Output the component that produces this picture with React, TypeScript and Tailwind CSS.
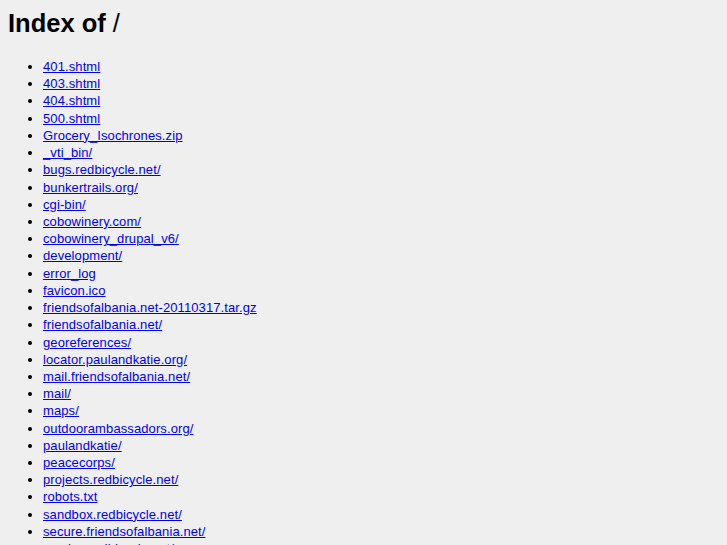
import React from 'react';

const entries = [
  '401.shtml',
  '403.shtml',
  '404.shtml',
  '500.shtml',
  'Grocery_Isochrones.zip',
  '_vti_bin/',
  'bugs.redbicycle.net/',
  'bunkertrails.org/',
  'cgi-bin/',
  'cobowinery.com/',
  'cobowinery_drupal_v6/',
  'development/',
  'error_log',
  'favicon.ico',
  'friendsofalbania.net-20110317.tar.gz',
  'friendsofalbania.net/',
  'georeferences/',
  'locator.paulandkatie.org/',
  'mail.friendsofalbania.net/',
  'mail/',
  'maps/',
  'outdoorambassadors.org/',
  'paulandkatie/',
  'peacecorps/',
  'projects.redbicycle.net/',
  'robots.txt',
  'sandbox.redbicycle.net/',
  'secure.friendsofalbania.net/',
  'service.redbicycle.net/',
  'stats/',
];

export default function App() {
  return (
    <div className="h-screen overflow-hidden bg-[#efefef] p-2 text-black font-['Liberation_Sans',Arial,sans-serif]">
      <h1 className="m-0 text-[25.5px] font-bold leading-[30px]">
        Index of <span className="font-normal">/</span>
      </h1>
      <ul className="mt-[20px] list-disc pl-[35px] text-[13px] leading-[17.22px] tracking-[0.1px]">
        {entries.map((name) => (
          <li key={name}>
            <a href={'/' + name} className="text-[#0000ee] underline">
              {name}
            </a>
          </li>
        ))}
      </ul>
    </div>
  );
}
